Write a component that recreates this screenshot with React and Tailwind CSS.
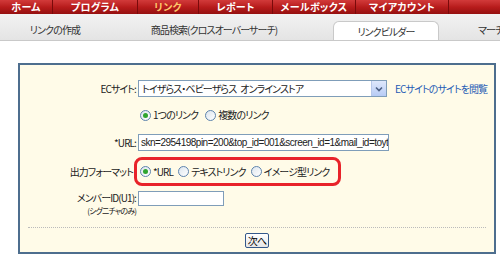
import { useState } from "react";

const navItems = [
  { label: "ホーム", w: "w-[53px]" },
  { label: "プログラム", w: "w-[85px]" },
  { label: "リンク", w: "w-[61px]", active: true },
  { label: "レポート", w: "w-[74px]" },
  { label: "メールボックス", w: "w-[83px]" },
  { label: "マイアカウント", w: "w-[93px]" },
];

function Radio({ checked, label, onClick }) {
  return (
    <label className="flex items-center gap-[2px] cursor-pointer shrink-0" onClick={onClick}>
      <span className="w-[11px] h-[11px] shrink-0 rounded-full border border-[#5d83ad] bg-gradient-to-br from-[#dce5ee] to-white flex items-center justify-center">
        {checked && <span className="w-[5px] h-[5px] rounded-full bg-[#2fa52f]" />}
      </span>
      <span>{label}</span>
    </label>
  );
}

export default function App() {
  const [linkType, setLinkType] = useState("single");
  const [format, setFormat] = useState("url");

  return (
    <div className="w-[500px] h-[260px] bg-white overflow-hidden text-[10px] tracking-[-0.9px] text-[#222] font-['Noto_Sans_CJK_JP',sans-serif] [font-feature-settings:'palt'] leading-none whitespace-nowrap">
      {/* グローバルナビ */}
      <div className="h-[14px] flex bg-gradient-to-b from-[#d23a3a] via-[#b81c1c] to-[#951010]">
        {navItems.map((item) => (
          <div
            key={item.label}
            className={`${item.w} shrink-0 h-full flex items-center justify-center border-r border-[#7a0a0a] text-[10px] font-bold tracking-[0.3px] ${
              item.active ? "text-[#ffc96b]" : "text-white"
            }`}
          >
            {item.label}
          </div>
        ))}
        <div className="flex-1" />
      </div>

      {/* タブ */}
      <div className="h-[27px] flex items-end bg-gradient-to-b from-[#f2f2f2] to-[#e4e4e4] border-b border-[#c9c9c9] text-[#333] overflow-hidden">
        <div className="w-[110px] shrink-0 h-[20px] flex items-center justify-center">リンクの作成</div>
        <div className="w-[208px] shrink-0 h-[20px] flex items-center justify-center">商品検索(クロスオーバーサーチ)</div>
        <div className="ml-[15px] w-[106px] shrink-0 h-[20px] -mb-px bg-white rounded-t-[6px] border border-b-0 border-[#c9c9c9] flex items-center justify-center">
          リンクビルダー
        </div>
        <div className="ml-[39px] shrink-0 h-[20px] flex items-center">マーチャント</div>
      </div>

      {/* フォーム */}
      <div className="mt-[22px] ml-[18px] w-[478px] h-[191px] border-2 border-[#4d6e8e] bg-[#fffbe8] flex flex-col">
        <div className="mt-[15px] flex items-center h-[17px]">
          <div className="w-[116px] text-right">ECサイト:</div>
          <div className="ml-[2px] w-[249px] h-[17px] border border-[#7f9db9] bg-white flex items-center justify-between">
            <span className="pl-[3px] flex gap-[4px]">
              <span>トイザらス・ベビーザらス</span>
              <span>オンラインストア</span>
            </span>
            <span className="w-[15px] h-[15px] bg-gradient-to-b from-[#dfe8fb] to-[#b7cbf5] border-l border-[#b7c8ea] flex items-center justify-center">
              <svg width="8" height="6" viewBox="0 0 8 6">
                <path d="M1 1.5 L4 4.5 L7 1.5" fill="none" stroke="#4d6185" strokeWidth="1.6" />
              </svg>
            </span>
          </div>
          <a href="#" className="ml-[8px] text-[#1f5bb5]">ECサイトのサイトを閲覧</a>
        </div>

        <div className="mt-[11px] ml-[120px] flex items-center gap-[7px] h-[14px]">
          <Radio checked={linkType === "single"} label="1つのリンク" onClick={() => setLinkType("single")} />
          <Radio checked={linkType === "multi"} label="複数のリンク" onClick={() => setLinkType("multi")} />
        </div>

        <div className="mt-[12px] flex items-center h-[17px]">
          <div className="w-[116px] text-right">*URL:</div>
          <div className="ml-[2px] w-[251px] h-[17px] border border-[#7f9db9] bg-white flex items-center pl-[2px] overflow-hidden font-['Liberation_Sans',sans-serif] text-[10px] tracking-[-0.5px]">
            skn=2954198pin=200&amp;top_id=001&amp;screen_id=1&amp;mail_id=toyt
          </div>
        </div>

        <div className="mt-[6px] flex items-center h-[29px]">
          <div className="w-[113px] text-right">出力フォーマット</div>
          <div className="ml-[1px] w-[207px] h-[29px] border-[3px] border-[#e8232a] rounded-[8px] flex items-center gap-[5px] pl-[3px]">
            <Radio checked={format === "url"} label="*URL" onClick={() => setFormat("url")} />
            <Radio checked={format === "text"} label="テキストリンク" onClick={() => setFormat("text")} />
            <Radio checked={format === "image"} label="イメージ型リンク" onClick={() => setFormat("image")} />
          </div>
        </div>

        <div className="mt-[5px] flex items-start">
          <div className="w-[116px] flex flex-col items-end">
            <span className="h-[14px] flex items-center">メンバーID(U1):</span>
            <span className="mt-[2px] text-[8px]">(シグニチャのみ)</span>
          </div>
          <div className="ml-[2px] w-[86px] h-[15px] border border-[#7f9db9] bg-white" />
        </div>

        <div className="mt-[12px] mx-[8px] border-t border-dotted border-[#bbb]" />

        <div className="mt-[5px] flex justify-center">
          <button className="px-[2px] h-[15px] border border-[#34588a] rounded-[2px] bg-gradient-to-b from-white to-[#e6e6e6] text-[10px] text-black flex items-center justify-center">
            次へ
          </button>
        </div>
      </div>
    </div>
  );
}
